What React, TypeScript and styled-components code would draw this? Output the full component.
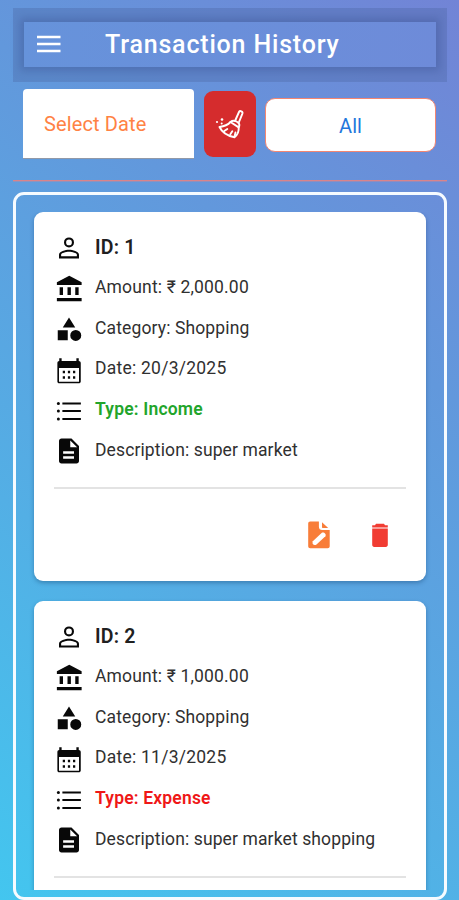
import React from "react";
import styled, { createGlobalStyle } from "styled-components";

const GlobalStyle = createGlobalStyle`
  * { box-sizing: border-box; }
  html, body { margin: 0; padding: 0; height: 100%; overflow: hidden; }
  body { font-family: Roboto, "Liberation Sans", sans-serif; color: #202020; }
`;

const Screen = styled.main`
  width: 459px;
  height: 900px;
  padding: 8px 12px 0 13px;
  display: flex;
  flex-direction: column;
  overflow: hidden;
  background: linear-gradient(38deg, #43c6ef 0%, #53afe5 32%, #6298dc 68%, #7284d6 100%);
`;

const Header = styled.header`
  height: 74px;
  flex: none;
  padding: 14px 11px 15px;
  background: rgba(75, 100, 160, 0.32);
`;

const HeaderBar = styled.div`
  height: 45px;
  display: flex;
  align-items: center;
  padding-left: 13px;
  background: linear-gradient(90deg, #6693db, #6e8bd9);
  box-shadow: 0 0 8px 4px rgba(60, 85, 150, 0.4);
`;

const MenuButton = styled.button`
  display: flex;
  padding: 0;
  border: 0;
  width: 24px;
  height: 18px;
  margin-top: -2px;
  background: none;
  color: #fff;
`;

const Title = styled.h1`
  margin: 0 0 0 44px;
  font-size: 25px;
  line-height: 30px;
  font-weight: 500;
  letter-spacing: 0.82px;
  white-space: nowrap;
  color: #fff;
`;

const Filters = styled.section`
  height: 98px;
  flex: none;
  display: flex;
  align-items: flex-start;
  padding: 7px 11px 0 10px;
`;

const DateField = styled.div`
  width: 171px;
  height: 70px;
  padding: 0 0 0 21px;
  display: flex;
  align-items: center;
  background: #fff;
  border-radius: 4px 4px 0 0;
  border-bottom: 1px solid #9199a8;
  font-size: 20px;
  letter-spacing: 0.13px;
  color: #ff8244;
`;

const ClearButton = styled.button`
  width: 52px;
  height: 66px;
  margin: 2px 0 0 10px;
  padding: 0;
  display: flex;
  align-items: center;
  justify-content: center;
  border: 0;
  border-radius: 9px;
  background: #d52c2d;
  color: #fff;
`;

const AllButton = styled.button`
  width: 171px;
  height: 54px;
  margin: 9px 0 0 9px;
  padding: 1px 0 0;
  border: 1px solid #f38672;
  border-radius: 10px;
  background: #fff;
  font: 400 20px Roboto, sans-serif;
  letter-spacing: 0;
  color: #2377dc;
`;

const Separator = styled.hr`
  width: 100%;
  height: 2px;
  margin: 0 0 -1px;
  flex: none;
  border: 0;
  background: linear-gradient(#d9848b 50%, rgba(217, 132, 139, 0.4) 50%);
`;

const ListFrame = styled.section`
  height: 708px;
  flex: none;
  margin-top: 11px;
  padding: 17px 18px 7px;
  border: 3px solid #f6fbff;
  border-radius: 11px;
`;

const ListViewport = styled.div`
  height: 100%;
  margin: 0 -10px;
  padding: 0 10px;
  overflow: hidden;
`;

const Card = styled.article`
  height: 369px;
  margin-bottom: 20px;
  padding: 15px 20px 0;
  background: #fff;
  border-radius: 9px;
  box-shadow: 0 2px 4px rgba(20, 65, 110, 0.4);
`;

const Details = styled.div`
  display: grid;
  grid-template-rows: repeat(6, 40.7px);
`;

const Detail = styled.div<{ $tone?: string; $spacing?: number; $size?: number; $weight?: number; $lift?: number }>`
  display: flex;
  align-items: flex-start;
  font-size: ${(p) => p.$size ?? 17.5}px;
  font-weight: ${(p) => p.$weight ?? 400};
  color: ${(p) => p.$tone ?? "#303030"};
  letter-spacing: ${(p) => p.$spacing ?? 0.13}px;
  white-space: nowrap;

  svg {
    width: 30px;
    height: 30px;
    margin: 6px 11px 0 0;
    flex: none;
    color: #080808;
  }
  span {
    line-height: 40px;
    margin-top: ${(p) => -(p.$lift ?? 0)}px;
  }
`;

const CardActions = styled.div`
  height: 93px;
  margin-top: 16px;
  padding: 0 18px 0 0;
  display: flex;
  align-items: center;
  justify-content: flex-end;
  gap: 42px;
  border-top: 2px solid #e3e3e3;
`;

const ActionButton = styled.button<{ $color: string; $width: number }>`
  width: ${(p) => p.$width}px;
  height: 28px;
  padding: 0;
  display: flex;
  align-items: center;
  justify-content: center;
  border: 0;
  background: none;
  color: ${(p) => p.$color};
`;

const paths = {
  person: "M12 3.5a4 4 0 1 0 0 8 4 4 0 0 0 0-8Zm0 1.7a2.3 2.3 0 1 1 0 4.6 2.3 2.3 0 0 1 0-4.6ZM12 13.3c-2.7 0-8 1.3-8 4v3.1h16v-3.1c0-2.7-5.3-4-8-4Zm0 1.7c2.6 0 6.3 1.2 6.3 2.3v1.4H5.7v-1.4C5.7 16.2 9.4 15 12 15Z",
  bank: "M4.5 10.5v6.2h2.7v-6.2H4.5Zm6.3 0v6.2h2.7v-6.2h-2.7ZM2.3 21.8h19.8v-2.7H2.3v2.7ZM17 10.5v6.2h2.7v-6.2H17ZM12.2 1.3 2.3 6.5v2.2h19.8V6.5Z",
  category: "m12 2.7-5 8h10Zm5.4 10a4.4 4.4 0 1 0 0 8.8 4.4 4.4 0 0 0 0-8.8ZM3 13h8v8H3Z",
  document: "M6 2c-1.1 0-2 .9-2 2v16c0 1.1.9 2 2 2h12c1.1 0 2-.9 2-2V8l-6-6H6Zm10 16.2H7.3v-2H16v2Zm0-4H7.3v-2H16v2Zm-3-5.2V3.5L18.5 9H13Z",
};

const CalendarIcon = () => (
  <svg viewBox="0 0 24 24" aria-hidden="true">
    <path fill="currentColor" d="M4.2 2.6h1.9v2.2h11.8V2.6h1.9v2.2c.9 0 1.6.7 1.6 1.6v14.7c0 .9-.7 1.5-1.6 1.5H4.2c-.9 0-1.5-.6-1.5-1.5V6.4c0-.9.6-1.6 1.5-1.6V2.6Zm-.2 7.7v11h16v-11H4Z" />
    <path fill="currentColor" d="M7 12.6h1.8v1.9H7Zm4.1 0h1.8v1.9h-1.8Zm4.1 0H17v1.9h-1.8ZM7 17h1.8v1.9H7Zm4.1 0h1.8v1.9h-1.8Zm4.1 0H17v1.9h-1.8Z" />
  </svg>
);

const ListIcon = () => (
  <svg viewBox="0 0 24 24" aria-hidden="true">
    <path stroke="currentColor" strokeWidth="1.6" d="M6.7 6h14.8M6.7 12h14.8M6.7 18.3h14.8" />
    <circle cx="3.5" cy="6" r="1.2" fill="currentColor" />
    <circle cx="3.5" cy="12" r="1.2" fill="currentColor" />
    <circle cx="3.5" cy="18.3" r="1.2" fill="currentColor" />
  </svg>
);

const SolidIcon = ({ path }: { path: string }) => (
  <svg viewBox="0 0 24 24" aria-hidden="true"><path fill="currentColor" d={path} /></svg>
);

const BroomIcon = () => (
  <svg width="31" height="32" viewBox="0 0 31 32" fill="none" stroke="currentColor" strokeWidth="1.9" strokeLinecap="round" strokeLinejoin="round" aria-hidden="true">
    <path d="M20 13 24 4c.9-1.8 4.2-.6 3.4 1.6L23.6 15" />
    <path d="M15.5 14c2.4-2 4.7-1.4 7.2.2 2 1.3 1.9 3.4 1 5.2M15.5 14l8.2 5.4" />
    <path d="M15.5 14c-2.8 3-6.3 4.3-11 5C7 24.3 12 27.7 19.5 29.3c3.3-2.6 4.5-5.7 4.2-9.9" />
    <path d="m9.3 23 3-2m3 5.2 2-2.9M19.5 28.5l1-4" />
    <circle cx="2" cy="14" r="1.1" fill="currentColor" stroke="none" />
    <circle cx="7" cy="11.5" r="1.3" fill="currentColor" stroke="none" />
    <circle cx="6.7" cy="15.5" r="1" fill="currentColor" stroke="none" />
  </svg>
);

const EditFileIcon = () => (
  <svg width="22" height="28" viewBox="0 0 22 28" aria-hidden="true">
    <path fill="currentColor" d="M2.2.6h8.7v5.2c0 2 1.2 3.3 3.2 3.3h7.6v16.1c0 1.2-.8 2-2 2H2.2c-1.2 0-2-.8-2-2V2.6c0-1.2.8-2 2-2Z" />
    <path fill="currentColor" d="M14 1.2 20.2 7H15c-.7 0-1-.4-1-1Z" />
    <path fill="#fff" d="m4.8 20.2 8.8-8.3c2-1.3 5.1 1 3.8 3.4l-8.9 8.1c-1.9 1.2-5 .3-3.7-3.2Z" />
  </svg>
);

const TrashIcon = () => (
  <svg width="16" height="26" viewBox="0 0 16 26" aria-hidden="true">
    <path fill="currentColor" d="M.2 6.6h15.6v16.2c0 1.4-.8 2.1-2 2.1H2.2c-1.2 0-2-.7-2-2.1ZM.2 3.2H3l1-1.5h8l1 1.5h2.8v2.2H.2Z" />
  </svg>
);

interface Transaction {
  id: number;
  amount: string;
  date: string;
  type: "Income" | "Expense";
  description: string;
}

const transactions: Transaction[] = [
  { id: 1, amount: "2,000.00", date: "20/3/2025", type: "Income", description: "super market" },
  { id: 2, amount: "1,000.00", date: "11/3/2025", type: "Expense", description: "super market shopping" },
];

function TransactionCard({ item }: { item: Transaction }) {
  return (
    <Card>
      <Details>
        <Detail $lift={-1} $tone="#202020" $size={19.5} $weight={600} $spacing={0.2}><SolidIcon path={paths.person} /><span>ID: {item.id}</span></Detail>
        <Detail $lift={1} $spacing={0.17}><SolidIcon path={paths.bank} /><span>Amount: ₹ {item.amount}</span></Detail>
        <Detail><SolidIcon path={paths.category} /><span>Category: Shopping</span></Detail>
        <Detail $lift={1} $spacing={0.24}><CalendarIcon /><span>Date: {item.date}</span></Detail>
        <Detail $lift={1} $weight={600} $spacing={0.18} $tone={item.type === "Income" ? "#22a52b" : "#ef1717"}><ListIcon /><span>Type: {item.type}</span></Detail>
        <Detail $spacing={0.12}><SolidIcon path={paths.document} /><span>Description: {item.description}</span></Detail>
      </Details>
      <CardActions>
        <ActionButton aria-label="Edit" $color="#f87d39" $width={22}><EditFileIcon /></ActionButton>
        <ActionButton aria-label="Delete" $color="#f13c33" $width={16}><TrashIcon /></ActionButton>
      </CardActions>
    </Card>
  );
}

export default function App() {
  return (
    <>
      <GlobalStyle />
      <Screen>
        <Header>
          <HeaderBar>
            <MenuButton aria-label="Menu">
              <svg width="24" height="18" viewBox="0 0 24 18" aria-hidden="true"><path d="M0 2h23.5M0 9h23.5M0 16h23.5" stroke="currentColor" strokeWidth="2.6" /></svg>
            </MenuButton>
            <Title>Transaction History</Title>
          </HeaderBar>
        </Header>
        <Filters>
          <DateField>Select Date</DateField>
          <ClearButton aria-label="Clear filters"><BroomIcon /></ClearButton>
          <AllButton>All</AllButton>
        </Filters>
        <Separator />
        <ListFrame>
          <ListViewport>
            {transactions.map((item) => <TransactionCard key={item.id} item={item} />)}
          </ListViewport>
        </ListFrame>
      </Screen>
    </>
  );
}
